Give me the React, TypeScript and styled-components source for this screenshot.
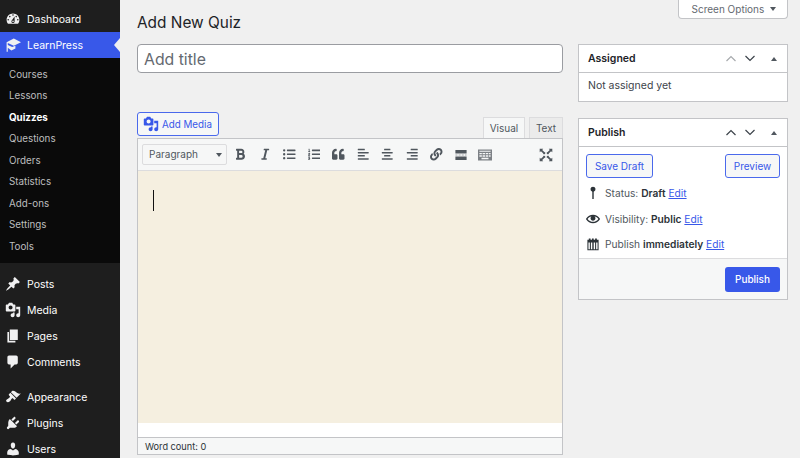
import { ReactNode } from 'react';
import { createGlobalStyle, styled } from 'styled-components';
import {
  FaAlignCenter,
  FaAlignLeft,
  FaAlignRight,
  FaBold,
  FaItalic,
  FaLink,
  FaListOl,
  FaListUl,
  FaQuoteLeft,
} from 'react-icons/fa';

const GlobalStyle = createGlobalStyle`
  html, body {
    margin: 0;
    padding: 0;
    height: 458px;
    overflow: hidden;
    background: #f0f0f0;
    font-family: Inter, "Liberation Sans", sans-serif;
  }
  * { box-sizing: border-box; }
`;

const BLUE = '#3858e9';
const OUTLINE = '#4a69ec';

const Page = styled.div`
  display: flex;
  width: 800px;
  height: 458px;
  overflow: hidden;
`;

const Sidebar = styled.nav`
  flex: 0 0 120px;
  height: 458px;
  padding-top: 6px;
  background: #1e1e1e;
  overflow: hidden;
`;

const MenuItem = styled.div<{ $active?: boolean }>`
  position: relative;
  display: flex;
  align-items: center;
  gap: 6px;
  height: 26px;
  padding-left: 5px;
  font-size: 10.5px;
  color: #fff;
  background: ${({ $active }) => ($active ? BLUE : 'transparent')};
  svg {
    flex: 0 0 16px;
    width: 16px;
    height: 16px;
    fill: #f0f0f1;
  }
`;

const ActiveArrow = styled.span`
  position: absolute;
  right: 0;
  top: 6px;
  border-style: solid;
  border-width: 7px 6px 7px 0;
  border-color: transparent #f0f0f0 transparent transparent;
`;

const Submenu = styled.div`
  height: 205px;
  padding-top: 5.5px;
  margin-bottom: 8px;
  background: #0a0a0a;
`;

const SubItem = styled.div<{ $current?: boolean }>`
  display: flex;
  align-items: center;
  height: 21.5px;
  padding-left: 9px;
  font-size: 9.8px;
  font-weight: ${({ $current }) => ($current ? 700 : 400)};
  color: ${({ $current }) => ($current ? '#fff' : '#bdbebf')};
`;

const MenuGap = styled.div`
  height: 9px;
`;

const Main = styled.main`
  flex: 1;
  display: flex;
  gap: 15px;
  padding-left: 17px;
`;

const EditorColumn = styled.div`
  flex: 0 0 426px;
  display: flex;
  flex-direction: column;
`;

const Heading = styled.h1`
  height: 44px;
  margin: 0;
  padding-top: 13px;
  font-size: 15.4px;
  line-height: 20px;
  font-weight: 400;
  color: #1d2327;
`;

const TitleInput = styled.div`
  display: flex;
  align-items: center;
  height: 28.5px;
  padding: 2px 0 0 6px;
  font-size: 15.8px;
  color: #646970;
  background: #fff;
  border: 1.5px solid #9a9ca1;
  border-radius: 4px;
`;

const MediaRow = styled.div`
  display: flex;
  justify-content: space-between;
  align-items: flex-end;
  height: 66.5px;
  margin-bottom: -1px;
`;

const AddMedia = styled.div`
  display: flex;
  align-items: center;
  gap: 3px;
  width: 82px;
  height: 24px;
  margin-bottom: 3px;
  padding-left: 5px;
  font-size: 9.8px;
  color: ${BLUE};
  background: #f6f7f7;
  border: 1.5px solid ${OUTLINE};
  border-radius: 3px;
  svg {
    width: 16px;
    height: 16px;
    fill: ${BLUE};
  }
`;

const Tabs = styled.div`
  display: flex;
  gap: 4px;
`;

const Tab = styled.div<{ $active?: boolean }>`
  display: flex;
  align-items: center;
  justify-content: center;
  width: ${({ $active }) => ($active ? '42px' : '34px')};
  height: 22px;
  font-size: 10px;
  color: #50575e;
  background: ${({ $active }) => ($active ? '#f6f7f7' : '#ebebeb')};
  border: 1px solid #dcdcde;
  border-bottom-color: ${({ $active }) => ($active ? '#f6f7f7' : '#c3c4c7')};
`;

const EditorBox = styled.div`
  display: flex;
  flex-direction: column;
  height: 317px;
  background: #fff;
  border: 1px solid #c3c4c7;
`;

const Toolbar = styled.div`
  display: flex;
  align-items: center;
  flex: 0 0 32px;
  padding: 0 4px;
  background: #f6f7f7;
  border-bottom: 1px solid #dcdcde;
`;

const FormatSelect = styled.div`
  position: relative;
  display: flex;
  align-items: center;
  width: 85px;
  height: 21px;
  margin-right: 1px;
  padding: 0 0 1px 6px;
  font-size: 10px;
  color: #50575e;
  background: #f6f7f7;
  border: 1px solid #dcdcde;
  border-radius: 2px;
  &::after {
    content: '';
    position: absolute;
    right: 4px;
    top: 8px;
    border-style: solid;
    border-width: 4px 3px 0 3px;
    border-color: #50575e transparent transparent transparent;
  }
`;

const ToolButton = styled.div<{ $push?: boolean; $muted?: boolean; $size?: number }>`
  display: flex;
  align-items: center;
  justify-content: center;
  flex: 0 0 24.5px;
  height: 24px;
  margin-left: ${({ $push }) => ($push ? 'auto' : '0')};
  color: ${({ $muted }) => ($muted ? '#7d8186' : '#50575e')};
  svg {
    width: ${({ $size }) => $size ?? 12.5}px;
    height: ${({ $size }) => $size ?? 12.5}px;
    fill: currentColor;
  }
`;

const Content = styled.div`
  flex: 0 0 252px;
  padding: 19px 15px;
  background: #f5efe0;
`;

const Caret = styled.div`
  width: 1px;
  height: 21px;
  background: #111;
`;

const ContentTail = styled.div`
  flex: 1;
  background: #fff;
`;

const WordCount = styled.div`
  display: flex;
  align-items: center;
  flex: 0 0 17px;
  padding-left: 7px;
  font-size: 9.2px;
  color: #2c3338;
  background: #f6f7f7;
  border-top: 1px solid #c3c4c7;
`;

const SideColumn = styled.aside`
  flex: 0 0 210px;
  display: flex;
  flex-direction: column;
`;

const ScreenOptions = styled.div`
  display: flex;
  align-items: center;
  align-self: flex-end;
  gap: 6px;
  width: 110px;
  height: 19px;
  margin-bottom: 25px;
  padding-left: 12.5px;
  font-size: 10px;
  color: #646970;
  background: #fff;
  border: 1px solid #c3c4c7;
  border-top: 0;
  border-radius: 0 0 4px 4px;
  &::after {
    content: '';
    border-style: solid;
    border-width: 4px 3px 0 3px;
    border-color: #50575e transparent transparent transparent;
  }
`;

const Box = styled.section`
  margin-bottom: 16px;
  background: #fff;
  border: 1px solid #c3c4c7;
`;

const BoxHead = styled.div`
  display: flex;
  align-items: center;
  height: 28px;
  padding: 0 10px 0 9px;
  border-bottom: 1px solid #c3c4c7;
`;

const BoxTitle = styled.h2`
  flex: 1;
  margin: 0;
  font-size: 10.5px;
  font-weight: 600;
  color: #1d2327;
`;

const ChevronIcon = styled.svg`
  width: 10px;
  height: 7px;
  margin-right: 9px;
  fill: none;
  stroke-width: 1.2;
`;

const Toggle = styled.span`
  margin-left: 7px;
  border-style: solid;
  border-width: 0 3px 4px 3px;
  border-color: transparent transparent #50575e transparent;
`;

const BoxBody = styled.div`
  height: 28px;
  padding: 6px 9px;
  font-size: 10.5px;
  line-height: 14px;
  color: #3c434a;
`;

const PublishActions = styled.div`
  display: flex;
  justify-content: space-between;
  padding: 7px 7px 0;
`;

const OutlineButton = styled.div<{ $width: number }>`
  display: flex;
  align-items: center;
  justify-content: center;
  width: ${({ $width }) => $width}px;
  height: 24px;
  font-size: 10px;
  color: ${BLUE};
  background: #f6f7f7;
  border: 1.5px solid ${OUTLINE};
  border-radius: 3px;
`;

const StatusList = styled.div`
  display: flex;
  flex-direction: column;
  gap: 5.5px;
  padding: 5px 0 4px 7px;
`;

const StatusRow = styled.div`
  display: flex;
  align-items: center;
  gap: 5px;
  height: 20px;
  font-size: 10.2px;
  color: #50575e;
  white-space: pre;
  svg {
    flex: 0 0 14px;
    width: 14px;
    height: 14px;
    fill: #2c3338;
  }
  b {
    font-weight: 600;
    color: #2c3338;
  }
  a {
    color: ${BLUE};
    text-decoration: underline;
  }
`;

const PublishFooter = styled.div`
  display: flex;
  justify-content: flex-end;
  align-items: center;
  height: 41px;
  padding-right: 7px;
  background: #f6f7f7;
  border-top: 1px solid #dcdcde;
`;

const PublishButton = styled.div`
  display: flex;
  align-items: center;
  justify-content: center;
  width: 55px;
  height: 25px;
  font-size: 10px;
  font-weight: 500;
  color: #fff;
  background: ${BLUE};
  border-radius: 3px;
`;

const Dashicon = ({ d }: { d: string }) => (
  <svg viewBox="0 0 20 20" aria-hidden="true">
    <path d={d} />
  </svg>
);

const mediaPath =
  'M13 11V4c0-.55-.45-1-1-1h-1.67L9 1H5L3.67 3H2c-.55 0-1 .45-1 1v7c0 .55.45 1 1 1h10c.55 0 1-.45 1-1zM7 4.5c1.38 0 2.5 1.12 2.5 2.5S8.38 9.5 7 9.5 4.5 8.38 4.5 7 5.62 4.5 7 4.5zM14 6h5v10.5c0 1.38-1.12 2.5-2.5 2.5S14 17.88 14 16.5s1.12-2.5 2.5-2.5c.17 0 .34.02.5.05V9h-3V6zm-4 8.05V13h2v3.5c0 1.38-1.12 2.5-2.5 2.5S7 17.88 7 16.5 8.12 14 9.5 14c.17 0 .34.02.5.05z';

const icons = {
  dashboard:
    'M3.76 16h12.48c1.1-1.37 1.76-3.11 1.76-5 0-4.42-3.58-8-8-8s-8 3.58-8 8c0 1.89.66 3.63 1.76 5zM10 4c.55 0 1 .45 1 1s-.45 1-1 1-1-.45-1-1 .45-1 1-1zM6 6c.55 0 1 .45 1 1s-.45 1-1 1-1-.45-1-1 .45-1 1-1zm8 0c.55 0 1 .45 1 1s-.45 1-1 1-1-.45-1-1 .45-1 1-1zm-5.37 5.55L12 7v6c0 1.1-.9 2-2 2s-2-.9-2-2c0-.57.24-1.08.63-1.45zM4 10c.55 0 1 .45 1 1s-.45 1-1 1-1-.45-1-1 .45-1 1-1zm12 0c.55 0 1 .45 1 1s-.45 1-1 1-1-.45-1-1 .45-1 1-1zm-5 3c0-.55-.45-1-1-1s-1 .45-1 1 .45 1 1 1 1-.45 1-1z',
  learn:
    'M11 2 20 6.5 11 11 3.5 7.5V10L9 12.5 13 11V14.5L8 17 3.5 13.5V18.5H2V6.5z',
  posts:
    'M10.44 3.02l1.82-1.82 6.36 6.35-1.83 1.82c-1.05-.68-2.48-.57-3.41.36l-.75.75c-.92.93-1.04 2.35-.35 3.41l-1.83 1.82-2.41-2.41-2.8 2.79c-.42.42-3.38 2.71-3.8 2.29s1.86-3.39 2.28-3.81l2.79-2.79L4.1 9.36l1.83-1.82c1.05.69 2.48.57 3.4-.36l.75-.75c.93-.92 1.05-2.35.36-3.41z',
  media: mediaPath,
  pages: 'M6 15V2h10v13H6zm-1 1h8v2H3V5h2v11z',
  comments:
    'M5 2h9c1.1 0 2 .9 2 2v7c0 1.1-.9 2-2 2h-2l-5 5v-5H5c-1.1 0-2-.9-2-2V4c0-1.1.9-2 2-2z',
  appearance:
    'M14.48 11.06L7.41 3.99l1.5-1.5c.5-.56 2.3-.47 3.51.32 1.21.8 1.43 1.28 2.91 2.1 1.18.64 2.45 1.26 4.45.85zm-.71.71L6.7 4.7 4.93 6.47c-.39.39-.39 1.02 0 1.41l1.06 1.06c.39.39.39 1.03 0 1.42-.6.6-1.43 1.11-2.21 1.69-.35.26-.7.53-1.01.84C1.43 13.23.91 14.85 2.03 16c1.15 1.12 2.77.6 4.13-.77.31-.31.58-.66.84-1.01.58-.78 1.09-1.61 1.69-2.21.39-.39 1.03-.39 1.42 0l1.06 1.06c.39.39 1.02.39 1.41 0z',
  plugins:
    'M13.11 4.36L9.87 7.6 8 5.73l3.24-3.24c.35-.34 1.05-.2 1.56.32.52.51.66 1.21.31 1.55zm-8 1.77l.91-1.12 9.01 9.01-1.19.84c-.71.71-2.63 1.16-3.82 1.16H6.14L4.9 17.26c-.59.59-1.54.59-2.12 0-.59-.58-.59-1.53 0-2.12l1.24-1.24v-3.88c0-1.13.4-3.19 1.09-3.89zm7.26 3.97l3.24-3.24c.34-.35 1.04-.21 1.55.31.52.51.66 1.21.31 1.55l-3.24 3.25z',
  users:
    'M10 9.25c-2.27 0-2.73-3.44-2.73-3.44C7 4.02 7.82 2 9.97 2c2.16 0 2.98 2.02 2.71 3.81 0 0-.41 3.44-2.68 3.44zm0 2.57L12.72 10c2.39 0 4.52 2.33 4.52 4.53v2.49s-3.65 1.13-7.24 1.13c-3.65 0-7.24-1.13-7.24-1.13v-2.49c0-2.25 1.94-4.48 4.47-4.48z',
  pin: 'M10 1a3.6 3.6 0 0 1 1 7.06V18.5H9V8.06A3.6 3.6 0 0 1 10 1z',
  eye: 'M19.7 9.4C17.7 6 14 3.9 10 3.9S2.3 6 .3 9.4L0 10l.3.6c2 3.4 5.7 5.5 9.7 5.5s7.7-2.1 9.7-5.5l.3-.6-.3-.6zM10 14.1c-3.1 0-6-1.6-7.7-4.1C3.6 8 5.7 6.6 8 6.1c-.9.6-1.5 1.7-1.5 2.9 0 1.9 1.6 3.5 3.5 3.5s3.5-1.6 3.5-3.5c0-1.2-.6-2.3-1.5-2.9 2.3.5 4.4 1.9 5.7 3.9-1.7 2.5-4.6 4.1-7.7 4.1z',
  calendar:
    'M2 4h2V2h2.5v2h2V2H11v2h2V2h2.5v2H18v15H2zM3.5 8v9.5h2V8zm3.5 0v9.5h2V8zm4 0v9.5h2V8zm3.5 0v9.5h2V8z',
  more: 'M2 3h16v5H2zM2 12h16v5H2zM2 9.5h3v1H2zM6.5 9.5h3v1h-3zM11 9.5h3v1h-3zM15.5 9.5H18v1h-2.5z',
  kitchen:
    'M0 2h20v16H0zM2 4v1.5h16V4zM2 7v2h3.5V7zm4.5 0v2H10V7zm4.5 0v2h3.5V7zm4.5 0v2H18V7zM2 10.5v2h3.5v-2zm4.5 0v2H10v-2zm4.5 0v2h3.5v-2zm4.5 0v2H18v-2zM5 14v2h10v-2z',
  fullscreen:
    'M1 1h5L4.6 2.8 7.6 5.8A2 2 0 0 1 9 6.5 2 2 0 0 1 6.5 9 2 2 0 0 1 5.8 7.6L2.8 4.6 1 6zM19 1v5l-1.8-1.4-3 3A2 2 0 0 1 13.5 9 2 2 0 0 1 11 6.5 2 2 0 0 1 12.4 5.8l3-3L14 1zM1 19v-5l1.8 1.4 3-3A2 2 0 0 1 6.5 11 2 2 0 0 1 9 13.5 2 2 0 0 1 7.6 14.2l-3 3L6 19zM19 19h-5l1.4-1.8-3-3A2 2 0 0 1 11 13.5 2 2 0 0 1 13.5 11 2 2 0 0 1 14.2 12.4l3 3L19 14z',
};

const Chevron = ({ up, color }: { up?: boolean; color: string }) => (
  <ChevronIcon viewBox="0 0 10 7" stroke={color}>
    <path d={up ? 'M.5 6 5 1.5 9.5 6' : 'M.5 1 5 5.5 9.5 1'} />
  </ChevronIcon>
);

const BoxHeader = ({ title, dimUp }: { title: string; dimUp?: boolean }) => (
  <BoxHead>
    <BoxTitle>{title}</BoxTitle>
    <Chevron up color={dimUp ? '#a7aaad' : '#3c434a'} />
    <Chevron color="#3c434a" />
    <Toggle />
  </BoxHead>
);

const tools: ReactNode[] = [
  <FaBold key="bold" />,
  <FaItalic key="italic" />,
  <FaListUl key="ul" />,
  <FaListOl key="ol" />,
  <FaQuoteLeft key="quote" />,
  <FaAlignLeft key="left" />,
  <FaAlignCenter key="center" />,
  <FaAlignRight key="right" />,
  <FaLink key="link" />,
];

const subItems = ['Courses', 'Lessons', 'Quizzes', 'Questions', 'Orders', 'Statistics', 'Add-ons', 'Settings', 'Tools'];

export default function App() {
  return (
    <>
      <GlobalStyle />
      <Page>
        <Sidebar>
          <MenuItem>
            <Dashicon d={icons.dashboard} />
            Dashboard
          </MenuItem>
          <MenuItem $active>
            <Dashicon d={icons.learn} />
            LearnPress
            <ActiveArrow />
          </MenuItem>
          <Submenu>
            {subItems.map(item => (
              <SubItem key={item} $current={item === 'Quizzes'}>
                {item}
              </SubItem>
            ))}
          </Submenu>
          <MenuItem>
            <Dashicon d={icons.posts} />
            Posts
          </MenuItem>
          <MenuItem>
            <Dashicon d={icons.media} />
            Media
          </MenuItem>
          <MenuItem>
            <Dashicon d={icons.pages} />
            Pages
          </MenuItem>
          <MenuItem>
            <Dashicon d={icons.comments} />
            Comments
          </MenuItem>
          <MenuGap />
          <MenuItem>
            <Dashicon d={icons.appearance} />
            Appearance
          </MenuItem>
          <MenuItem>
            <Dashicon d={icons.plugins} />
            Plugins
          </MenuItem>
          <MenuItem>
            <Dashicon d={icons.users} />
            Users
          </MenuItem>
        </Sidebar>
        <Main>
          <EditorColumn>
            <Heading>Add New Quiz</Heading>
            <TitleInput>Add title</TitleInput>
            <MediaRow>
              <AddMedia>
                <Dashicon d={mediaPath} />
                Add Media
              </AddMedia>
              <Tabs>
                <Tab $active>Visual</Tab>
                <Tab>Text</Tab>
              </Tabs>
            </MediaRow>
            <EditorBox>
              <Toolbar>
                <FormatSelect>Paragraph</FormatSelect>
                {tools.map((tool, index) => (
                  <ToolButton key={index}>{tool}</ToolButton>
                ))}
                <ToolButton $size={14}>
                  <Dashicon d={icons.more} />
                </ToolButton>
                <ToolButton $muted $size={14}>
                  <Dashicon d={icons.kitchen} />
                </ToolButton>
                <ToolButton $push $size={14}>
                  <Dashicon d={icons.fullscreen} />
                </ToolButton>
              </Toolbar>
              <Content>
                <Caret />
              </Content>
              <ContentTail />
              <WordCount>Word count: 0</WordCount>
            </EditorBox>
          </EditorColumn>
          <SideColumn>
            <ScreenOptions>Screen Options</ScreenOptions>
            <Box>
              <BoxHeader title="Assigned" dimUp />
              <BoxBody>Not assigned yet</BoxBody>
            </Box>
            <Box>
              <BoxHeader title="Publish" />
              <PublishActions>
                <OutlineButton $width={67}>Save Draft</OutlineButton>
                <OutlineButton $width={55}>Preview</OutlineButton>
              </PublishActions>
              <StatusList>
                <StatusRow>
                  <Dashicon d={icons.pin} />
                  <span>
                    Status: <b>Draft</b> <a>Edit</a>
                  </span>
                </StatusRow>
                <StatusRow>
                  <Dashicon d={icons.eye} />
                  <span>
                    Visibility: <b>Public</b> <a>Edit</a>
                  </span>
                </StatusRow>
                <StatusRow>
                  <Dashicon d={icons.calendar} />
                  <span>
                    Publish <b>immediately</b> <a>Edit</a>
                  </span>
                </StatusRow>
              </StatusList>
              <PublishFooter>
                <PublishButton>Publish</PublishButton>
              </PublishFooter>
            </Box>
          </SideColumn>
        </Main>
      </Page>
    </>
  );
}
